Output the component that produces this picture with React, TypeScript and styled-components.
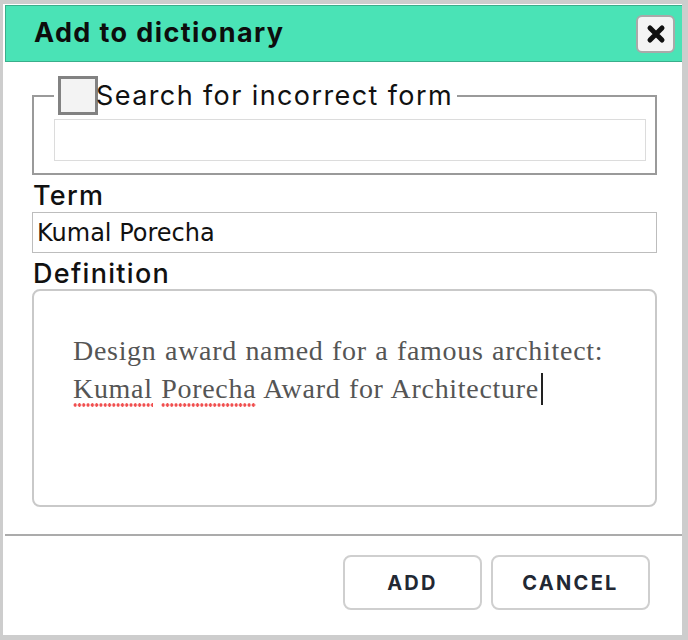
import React from "react";
import styled, { createGlobalStyle } from "styled-components";

const Global = createGlobalStyle`
  html, body { margin: 0; padding: 0; background: #cdcdcd; }
  body { width: 688px; height: 640px; overflow: hidden; }
`;

const Dialog = styled.div`
  box-sizing: border-box;
  margin: 4px 0 0 3px;
  width: 679px;
  height: 631px;
  background: #fff;
  padding: 1px 0 0 2px;
  display: flex;
  flex-direction: column;
`;

const Header = styled.div`
  box-sizing: border-box;
  height: 57px;
  background: #4ae3b6;
  border: 1px solid #3aae8b;
  border-right: none;
  display: flex;
  align-items: center;
  justify-content: space-between;
  padding: 0 7px 0 28px;
`;

const Title = styled.h1`
  margin: 0 0 2px;
  font-family: Inter, "Liberation Sans", sans-serif;
  font-weight: 700;
  font-size: 27px;
  letter-spacing: 1.4px;
  color: #0d0d0d;
`;

const CloseButton = styled.button`
  box-sizing: border-box;
  width: 39px;
  height: 38px;
  border: 2px solid #a9a9a9;
  border-radius: 6px;
  background: #f4f4f4;
  display: flex;
  align-items: center;
  justify-content: center;
  padding: 0;
`;

const Body = styled.div`
  padding: 14px 25px 0 27px;
  display: flex;
  flex-direction: column;
`;

const Fieldset = styled.fieldset`
  margin: 0;
  padding: 0 9px 12px 20px;
  border: 2px solid #9a9a9a;
  min-width: 0;
`;

const Legend = styled.legend`
  padding: 0 4px 0 4px;
  display: flex;
  align-items: center;
  font-family: Inter, "Liberation Sans", sans-serif;
  font-size: 27px;
  letter-spacing: 1.4px;
  color: #111;
`;

const Check = styled.span`
  box-sizing: border-box;
  width: 40px;
  height: 39px;
  border: 3px solid #828282;
  background: #f3f3f3;
  display: inline-block;
  margin-right: -2px;
`;

const SearchInput = styled.div`
  box-sizing: border-box;
  height: 42px;
  border: 1px solid #dcdcdc;
  margin-top: 4px;
`;

const Label = styled.div<{ $top: number }>`
  margin-top: ${(p) => p.$top}px;
  font-family: Inter, "Liberation Sans", sans-serif;
  font-weight: 500;
  font-size: 27px;
  letter-spacing: 1.3px;
  line-height: 30px;
  color: #111;
  padding-left: 1px;
`;

const TermInput = styled.div`
  box-sizing: border-box;
  height: 41px;
  border: 1px solid #bdbdbd;
  margin-top: 1px;
  padding: 5px 4px 0;
  font-family: "DejaVu Sans", sans-serif;
  font-size: 24px;
  line-height: 30px;
  color: #111;
`;

const TextArea = styled.div`
  box-sizing: border-box;
  height: 218px;
  border: 2px solid #c9c9c9;
  border-radius: 8px;
  padding: 41px 20px 0 39px;
  font-family: "Liberation Serif", serif;
  font-size: 28px;
  letter-spacing: 0.7px;
  word-spacing: 0.8px;
  line-height: 38px;
  color: #555;
`;

const Misspelled = styled.span`
  background-image: radial-gradient(circle, #f04f4f 1.5px, transparent 1.9px);
  background-size: 4.3px 4px;
  background-repeat: repeat-x;
  background-position: 0 100%;
  padding-bottom: 3px;
`;

const Caret = styled.span`
  display: inline-block;
  width: 2px;
  height: 32px;
  background: #222;
  vertical-align: -7px;
  margin-left: 2px;
`;

const Separator = styled.hr`
  margin: 27px 0 0;
  border: none;
  height: 2px;
  background: #ababab;
`;

const Footer = styled.div`
  display: flex;
  justify-content: flex-end;
  gap: 9px;
  padding: 19px 32px 0 0;
`;

const Button = styled.button<{ $w: number }>`
  box-sizing: border-box;
  width: ${(p) => p.$w}px;
  height: 55px;
  background: #fff;
  border: 2px solid #cfcfcf;
  border-radius: 8px;
  font-family: Inter, "Liberation Sans", sans-serif;
  font-weight: 700;
  font-size: 20px;
  letter-spacing: 2.3px;
  color: #222833;
  padding: 0;
`;

export default function App() {
  return (
    <>
      <Global />
      <Dialog>
        <Header>
          <Title>Add to dictionary</Title>
          <CloseButton aria-label="close">
            <svg width="20" height="20" viewBox="0 0 20 20">
              <path d="M4 4 L16 16 M16 4 L4 16" stroke="#111" strokeWidth="5" strokeLinecap="round" />
            </svg>
          </CloseButton>
        </Header>
        <Body>
          <Fieldset>
            <Legend>
              <Check />
              Search for incorrect form
            </Legend>
            <SearchInput />
          </Fieldset>
          <Label $top={6}>Term</Label>
          <TermInput>Kumal Porecha</TermInput>
          <Label $top={6}>Definition</Label>
          <TextArea>
            Design award named for a famous architect:
            <br />
            <Misspelled>Kumal</Misspelled> <Misspelled>Porecha</Misspelled> Award for Architecture
            <Caret />
          </TextArea>
        </Body>
        <Separator />
        <Footer>
          <Button $w={139}>ADD</Button>
          <Button $w={159}>CANCEL</Button>
        </Footer>
      </Dialog>
    </>
  );
}
